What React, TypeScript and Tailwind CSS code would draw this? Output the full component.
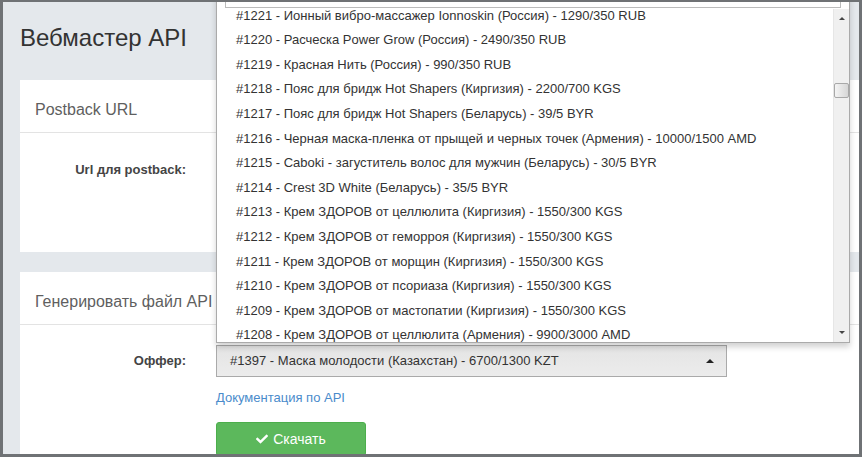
import React from 'react';
import { FaCheck } from 'react-icons/fa';

const offers = [
  '#1221 - Ионный вибро-массажер Ionnoskin (Россия) - 1290/350 RUB',
  '#1220 - Расческа Power Grow (Россия) - 2490/350 RUB',
  '#1219 - Красная Нить (Россия) - 990/350 RUB',
  '#1218 - Пояс для бридж Hot Shapers (Киргизия) - 2200/700 KGS',
  '#1217 - Пояс для бридж Hot Shapers (Беларусь) - 39/5 BYR',
  '#1216 - Черная маска-пленка от прыщей и черных точек (Армения) - 10000/1500 AMD',
  '#1215 - Caboki - загуститель волос для мужчин (Беларусь) - 30/5 BYR',
  '#1214 - Crest 3D White (Беларусь) - 35/5 BYR',
  '#1213 - Крем ЗДОРОВ от целлюлита (Киргизия) - 1550/300 KGS',
  '#1212 - Крем ЗДОРОВ от геморроя (Киргизия) - 1550/300 KGS',
  '#1211 - Крем ЗДОРОВ от морщин (Киргизия) - 1550/300 KGS',
  '#1210 - Крем ЗДОРОВ от псориаза (Киргизия) - 1550/300 KGS',
  '#1209 - Крем ЗДОРОВ от мастопатии (Киргизия) - 1550/300 KGS',
  '#1208 - Крем ЗДОРОВ от целлюлита (Армения) - 9900/3000 AMD',
];

function PanelHeader({ title }: { title: string }) {
  return (
    <div className="pt-[20px] pb-[12px] pl-[15px] border-b border-[#e3e3e3] text-[16px] leading-[20px] text-[#5f5f5f]">
      {title}
    </div>
  );
}

function GreenButton({ children }: { children?: React.ReactNode }) {
  return (
    <div className="w-[150px] h-[34px] shrink-0 rounded-[3px] bg-[#5cb85c] border border-[#4cae4c] text-white text-[14px] flex items-center justify-center gap-[5px]">
      {children}
    </div>
  );
}

function Scrollbar() {
  return (
    <div className="w-[16px] h-full bg-[#f0f0f0] border-l border-[#e6e6e6] flex flex-col items-center">
      <div className="h-[18px] flex items-center justify-center">
        <div className="w-0 h-0 border-l-[3px] border-r-[3px] border-b-[3px] border-l-transparent border-r-transparent border-b-[#444]" />
      </div>
      <div className="mt-[56px] w-[15px] h-[15px] rounded-[2px] border border-[#a8a8a8] bg-gradient-to-r from-[#f4f4f4] to-[#d6d6d6]" />
      <div className="flex-1" />
      <div className="h-[20px] flex items-center justify-center">
        <div className="w-0 h-0 border-l-[3px] border-r-[3px] border-t-[3px] border-l-transparent border-r-transparent border-t-[#444]" />
      </div>
    </div>
  );
}

export default function App() {
  return (
    <div
      className="w-[862px] h-[457px] bg-[#6f7275] pt-[2px] pl-[3px] pr-[3px] pb-[3px]"
      style={{ fontFamily: '"Liberation Sans", Arial, sans-serif' }}
    >
      <div className="relative w-full h-full overflow-hidden bg-[#e4e8ec] pl-[17px]">
        <div className="h-[72px] mb-[6px] flex items-center text-[24px] text-[#333]">Вебмастер API</div>

        {/* Postback panel */}
        <div className="w-[900px] bg-white">
          <PanelHeader title="Postback URL" />
          <div className="pt-[20px] pb-[19px] flex">
            <div className="w-[166px] shrink-0 flex items-center justify-end h-[34px] text-[13px] font-bold text-[#444]">
              Url для postback:
            </div>
            <div className="ml-[30px] flex flex-col">
              <div className="w-[620px] h-[34px] border border-[#ccc] rounded-[3px]" />
              <div className="mt-[12px]">
                <GreenButton />
              </div>
            </div>
          </div>
        </div>

        {/* API file panel */}
        <div className="mt-[20px] w-[900px] bg-white h-[200px]">
          <PanelHeader title="Генерировать файл API" />
          <div className="pt-[20px] flex">
            <div className="w-[166px] shrink-0 flex items-center justify-end h-[32px] text-[13px] font-bold text-[#444]">
              Оффер:
            </div>
            <div className="ml-[30px] flex flex-col">
              <div className="w-[511px] h-[32px] border border-[#aaa] bg-gradient-to-b from-[#e4e4e4] to-[#ececec] flex items-center pl-[13px] pr-[12px] text-[13px] text-[#333]">
                <span className="flex-1">#1397 - Маска молодости (Казахстан) - 6700/1300 KZT</span>
                <div className="w-0 h-0 border-l-[4px] border-r-[4px] border-b-[4px] border-l-transparent border-r-transparent border-b-[#222]" />
              </div>
              <a className="mt-[11px] text-[13px] leading-[20px] text-[#4a8bcb]">Документация по API</a>
              <div className="mt-[14px]">
                <GreenButton>
                  <FaCheck className="w-[12px] h-[12px]" />
                  <span>Скачать</span>
                </GreenButton>
              </div>
            </div>
          </div>
        </div>

        {/* Open select dropdown */}
        <div className="absolute left-[213px] top-[-30px] w-[634px] bg-white border border-t-0 border-[#aaa] shadow-[0_4px_6px_rgba(0,0,0,0.18)]">
          <div className="pt-[10px] px-[8px]">
            <div className="h-[26px] border border-[#bbb]" />
          </div>
          <div className="mt-[1px] h-[333px] flex">
            <div className="flex-1 overflow-hidden pl-[19px]">
              <div className="mt-[-5.3px]">
                {offers.map((o) => (
                  <div key={o} className="h-[24.6px] leading-[24.6px] text-[13px] text-[#333] whitespace-nowrap">
                    {o}
                  </div>
                ))}
              </div>
            </div>
            <Scrollbar />
          </div>
        </div>
      </div>
    </div>
  );
}
